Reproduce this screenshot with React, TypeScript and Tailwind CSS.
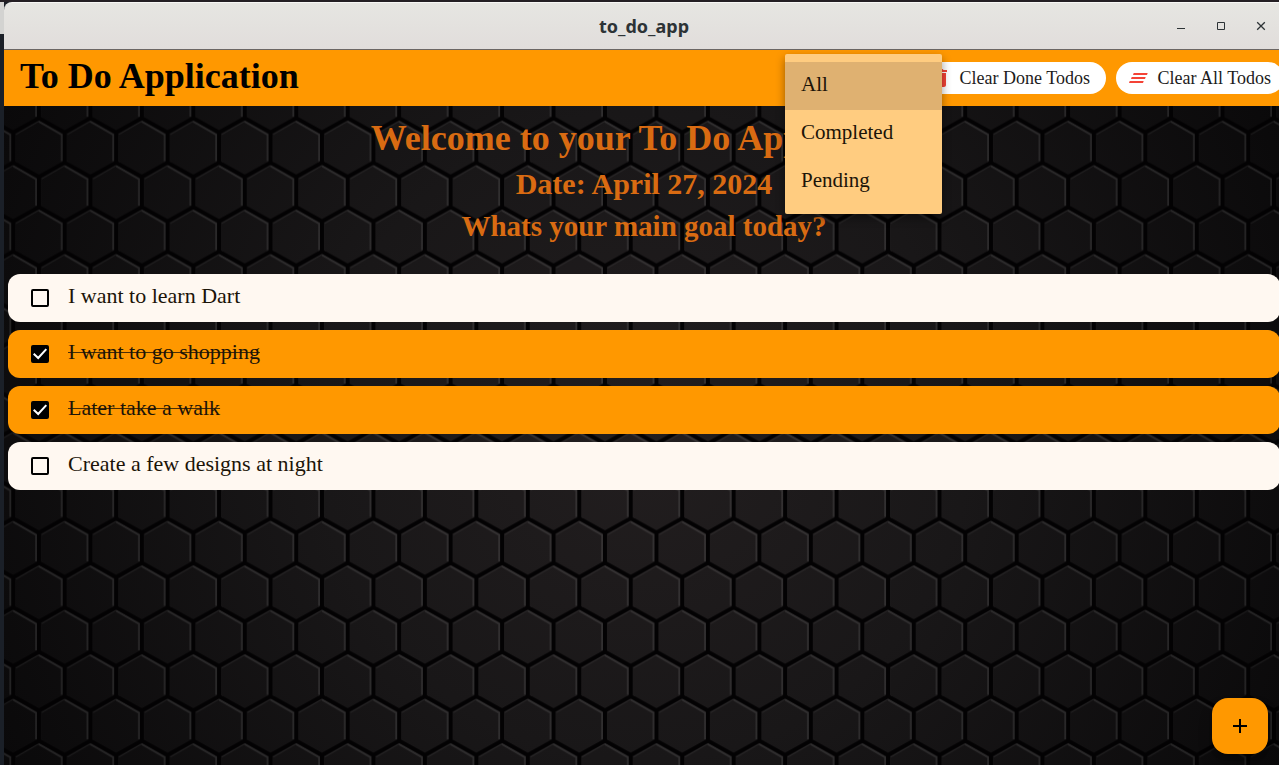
import { useState } from "react";

type Todo = { id: number; text: string; done: boolean };

const initialTodos: Todo[] = [
  { id: 1, text: "I want to learn Dart", done: false },
  { id: 2, text: "I want to go shopping", done: true },
  { id: 3, text: "Later take a walk", done: true },
  { id: 4, text: "Create a few designs at night", done: false },
];

const filters = ["All", "Completed", "Pending"];

/* Dark honeycomb wallpaper behind the list */
function Honeycomb() {
  return (
    <svg className="absolute inset-0 h-full w-full" aria-hidden="true">
      <defs>
        <radialGradient id="glow" gradientUnits="userSpaceOnUse" cx="640" cy="330" r="720">
          <stop offset="0" stopColor="#221e1f" />
          <stop offset="0.45" stopColor="#191718" />
          <stop offset="1" stopColor="#0a090a" />
        </radialGradient>
        <pattern id="hex" x="9.2" y="56.6" width="51.46" height="88.94" patternUnits="userSpaceOnUse">
          <g fill="none" stroke="#fff" strokeWidth="2">
            <g strokeOpacity="0.1">
              <path d="M0 3.4L23 16.7V43" />
              <path d="M25.73 47.9L48.7 61.2V87.4" />
              <path d="M-25.73 47.9L-2.8 61.2V87.4" />
            </g>
            <g strokeOpacity="0.07" strokeWidth="1">
              <path d="M28.5 16.4L51.46 3" />
              <path d="M2.8 60.9L25.73 47.5" />
            </g>
          </g>
          <g fill="none" stroke="#030203" strokeWidth="4">
            <path d="M-2 -1.1L0 0L25.73 14.3L51.46 0L53.46 -1.1M25.73 14.3V44.47" />
            <path d="M-2 59.9L0 58.77L25.73 44.47L51.46 58.77L53.46 59.9M0 58.77V88.94M51.46 58.77V88.94" />
            <path d="M-2 87.84L0 88.94L2 90.04M49.46 90.04L51.46 88.94L53.46 87.84" />
          </g>
        </pattern>
      </defs>
      <rect width="100%" height="100%" fill="url(#glow)" />
      <rect width="100%" height="100%" fill="url(#hex)" />
    </svg>
  );
}

function TitleBar() {
  return (
    <div className="grid h-12 grid-cols-[1fr_auto_1fr] items-center rounded-tl-lg border-t border-b border-t-[#f7f7f5] border-b-[#6b6664] bg-linear-to-b from-[#e6e6e2] to-[#e1dddb] text-[#2d3336]">
      <h1 className="col-start-2 font-['Noto_Sans',sans-serif] text-[18px] leading-6 font-bold">to_do_app</h1>
      <div className="flex justify-end pr-[3px]">
        <button aria-label="Minimize" className="flex h-10 w-10 items-center justify-center">
          <svg width="10" height="10" viewBox="0 0 10 10"><path d="M1 7.5H9" stroke="currentColor" /></svg>
        </button>
        <button aria-label="Maximize" className="flex h-10 w-10 items-center justify-center">
          <svg width="10" height="10" viewBox="0 0 10 10"><path d="M1.5 1.5H8.5V8.5H1.5Z" fill="none" stroke="currentColor" /></svg>
        </button>
        <button aria-label="Close" className="flex h-10 w-10 items-center justify-center">
          <svg width="10" height="10" viewBox="0 0 10 10"><path d="M1.2 1.2L8.8 8.8M8.8 1.2L1.2 8.8" stroke="currentColor" strokeWidth="1.3" /></svg>
        </button>
      </div>
    </div>
  );
}

type ActionButtonProps = { label: string; path: string; className?: string; onClick: () => void };

function ActionButton({ label, path, className = "", onClick }: ActionButtonProps) {
  return (
    <button
      onClick={onClick}
      className={`flex h-8 items-center gap-2 rounded-full bg-white pr-[13px] pl-[10px] text-[18px] leading-6 whitespace-nowrap text-[#1c1b1b] ${className}`}
    >
      <svg width="24" height="24" viewBox="0 0 24 24" fill="#f44336"><path d={path} /></svg>
      {label}
    </button>
  );
}

function TodoRow({ todo, onToggle }: { todo: Todo; onToggle: () => void }) {
  return (
    <li>
      <label className={`flex h-12 items-center gap-[19px] rounded-xl pl-[23px] ${todo.done ? "bg-[#ff9800]" : "bg-[#fff8f1]"}`}>
        <span className="grid place-items-center">
          <input
            type="checkbox"
            checked={todo.done}
            onChange={onToggle}
            className="col-start-1 row-start-1 size-[18px] appearance-none rounded-[2px] border-2 border-black checked:bg-black"
          />
          {todo.done && (
            <svg width="18" height="18" viewBox="0 0 18 18" className="pointer-events-none col-start-1 row-start-1">
              <path d="M2.7 8.7L7.2 13L15.3 4.1" fill="none" stroke="#fff" strokeWidth="2" />
            </svg>
          )}
        </span>
        <span className={`pb-1 text-[22px] leading-7 text-[#1c1408] ${todo.done ? "line-through decoration-[#1c1408]/80 decoration-1" : ""}`}>{todo.text}</span>
      </label>
    </li>
  );
}

export default function App() {
  const [todos, setTodos] = useState(initialTodos);
  const [filter, setFilter] = useState("All");

  const visible = todos.filter((t) => filter === "All" || t.done === (filter === "Completed"));
  const toggle = (id: number) => setTodos(todos.map((t) => (t.id === id ? { ...t, done: !t.done } : t)));

  return (
    <div className="flex min-h-screen flex-col overflow-hidden bg-[#1b1f26] font-['Liberation_Serif',serif]">
      <div className="h-[2px] bg-[#241f24]" />
      <div className="flex grow">
        <div className="flex w-1 shrink-0 flex-col bg-[#1b2028]" aria-hidden="true">
          <div className="h-8 bg-[#d3d3d1]" />
        </div>
        <div className="relative -mr-[5px] flex min-w-0 grow flex-col">
          <TitleBar />
          <header className="flex h-14 items-center justify-between bg-[#ff9800] pl-4">
            <h2 className="pb-1 text-[36px] leading-10 font-bold text-black">To Do Application</h2>
            <div className="flex gap-[10px]">
              <ActionButton
                label="Clear Done Todos"
                path="M6 19c0 1.1.9 2 2 2h8c1.1 0 2-.9 2-2V7H6v12zM19 4h-3.5l-1-1h-5l-1 1H5v2h14V4z"
                className="min-w-[188px]"
                onClick={() => setTodos(todos.filter((t) => !t.done))}
              />
              <ActionButton
                label="Clear All Todos"
                path="M5 13h14l.7-2H5.7zM3 17h14l.7-2H3.7zM7.7 7L7 9h14l.7-2z"
                onClick={() => setTodos([])}
              />
            </div>
          </header>

          <main className="relative grow">
            <Honeycomb />
            <div className="relative">
              <div className="pt-2 pb-7 text-center font-bold text-[#d96b12]">
                <p className="text-[36px] leading-12">Welcome to your To Do Application</p>
                <p className="text-[30px] leading-11">Date: April 27, 2024</p>
                <p className="text-[29px] leading-10">Whats your main goal today?</p>
              </div>
              <ul className="flex flex-col gap-2 px-1">
                {visible.map((t) => (
                  <TodoRow key={t.id} todo={t} onToggle={() => toggle(t.id)} />
                ))}
              </ul>
            </div>
            <button aria-label="Add todo" className="absolute right-4 bottom-[11px] flex size-14 items-center justify-center rounded-2xl bg-[#ff9800] shadow-lg shadow-black/40">
              <svg width="24" height="24" viewBox="0 0 24 24"><path d="M19 13h-6v6h-2v-6H5v-2h6V5h2v6h6v2z" /></svg>
            </button>
          </main>

          <div role="menu" className="absolute top-[52px] right-[342px] flex w-[157px] flex-col rounded-[2px] bg-[#ffcc80] py-2 shadow-[0_4px_10px_rgba(0,0,0,0.4)]">
            {filters.map((f) => (
              <button
                key={f}
                role="menuitem"
                onClick={() => setFilter(f)}
                className={`h-12 px-4 pb-1 text-left text-[21px] leading-6 text-[#1c1408] ${f === filter ? "bg-[#dfb171]" : ""}`}
              >
                {f}
              </button>
            ))}
          </div>
        </div>
      </div>
    </div>
  );
}
